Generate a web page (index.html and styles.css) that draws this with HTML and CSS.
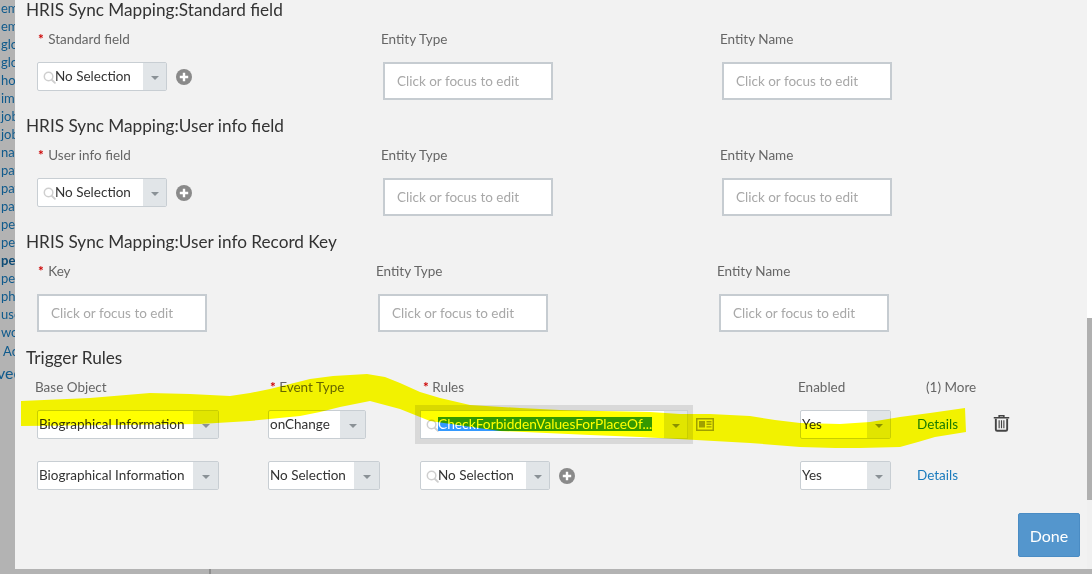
FILE: index.html
```html
<!DOCTYPE html>
<html lang="en">
<head>
<meta charset="utf-8">
<title>HRIS Sync Mapping</title>
<link rel="stylesheet" href="styles.css">
</head>
<body>
<svg width="0" height="0" class="defs" aria-hidden="true">
  <symbol id="i-search" viewBox="0 0 14 14"><circle cx="6" cy="6" r="4.6" fill="none" stroke="currentColor" stroke-width="1.6"/><path d="M9.4 9.4l3.4 3.4" stroke="currentColor" stroke-width="2" stroke-linecap="round"/></symbol>
  <symbol id="i-plus" viewBox="0 0 16 16"><circle cx="8" cy="8" r="8" fill="currentColor"/><path d="M8 3.8v8.4M3.8 8h8.4" stroke="#fff" stroke-width="2.4"/></symbol>
</svg>
<div class="stage">
  <div class="top">
    <div class="side">
      <div>em</div><div>em</div><div>glo</div><div>glo</div><div>hor</div><div>iml</div><div>job</div><div>job</div><div>nat</div><div>pay</div><div>pay</div><div>pay</div><div>per</div><div>per</div><div class="side-bold">per</div><div>per</div><div>pho</div><div>use</div><div>wo</div>
      <div class="side-add">Ac</div>
      <div class="side-big">vee</div>
    </div>
    <main class="modal">
      <section class="group">
        <h2 class="title">HRIS Sync Mapping:Standard field</h2>
        <div class="fields cols-a">
          <label class="label"><span class="req">*</span> Standard field</label>
          <label class="label">Entity Type</label>
          <label class="label">Entity Name</label>
          <div class="with-add">
            <div class="select w130 search"><svg class="mag"><use href="#i-search"/></svg><span class="val">No Selection</span><span class="arrow"><i></i></span></div>
            <svg class="add"><use href="#i-plus"/></svg>
          </div>
          <div class="input">Click or focus to edit</div>
          <div class="input">Click or focus to edit</div>
        </div>
      </section>
      <section class="group">
        <h2 class="title">HRIS Sync Mapping:User info field</h2>
        <div class="fields cols-a">
          <label class="label"><span class="req">*</span> User info field</label>
          <label class="label">Entity Type</label>
          <label class="label">Entity Name</label>
          <div class="with-add">
            <div class="select w130 search"><svg class="mag"><use href="#i-search"/></svg><span class="val">No Selection</span><span class="arrow"><i></i></span></div>
            <svg class="add"><use href="#i-plus"/></svg>
          </div>
          <div class="input">Click or focus to edit</div>
          <div class="input">Click or focus to edit</div>
        </div>
      </section>
      <section class="group">
        <h2 class="title">HRIS Sync Mapping:User info Record Key</h2>
        <div class="fields cols-b">
          <label class="label"><span class="req">*</span> Key</label>
          <label class="label">Entity Type</label>
          <label class="label">Entity Name</label>
          <div class="input">Click or focus to edit</div>
          <div class="input">Click or focus to edit</div>
          <div class="input">Click or focus to edit</div>
        </div>
      </section>
      <section class="rules">
        <h2 class="title">Trigger Rules</h2>
        <div class="rule-grid">
          <label class="label lb-base">Base Object</label>
          <label class="label lb-event"><span class="req">*</span> Event Type</label>
          <label class="label lb-rules"><span class="req">*</span> Rules</label>
          <label class="label lb-enabled">Enabled</label>
          <label class="label lb-more">(1) More</label>
          <span></span>

          <div class="select w182"><span class="val">Biographical Information</span><span class="arrow"><i></i></span></div>
          <div class="select w98"><span class="val">onChange</span><span class="arrow"><i></i></span></div>
          <div class="with-card">
            <div class="select w268 search focus"><svg class="mag"><use href="#i-search"/></svg><span class="val"><span class="sel">CheckForbiddenValuesForPlaceOf...</span></span><span class="arrow"><i></i></span></div>
            <svg class="card" viewBox="0 0 18 13"><rect x=".75" y=".75" width="16.5" height="11.5" fill="none" stroke="currentColor" stroke-width="1.5"/><rect x="3" y="3" width="6" height="6.5" fill="currentColor"/><path d="M10.5 3.7h5M10.5 6.3h5M10.5 8.9h5" stroke="currentColor" stroke-width="1.4"/></svg>
          </div>
          <div class="select w91"><span class="val">Yes</span><span class="arrow"><i></i></span></div>
          <a class="link">Details</a>
          <svg class="trash" viewBox="0 0 18 18"><path d="M6.5 2.6V1.2h5v1.4M.8 3.4h16.4" fill="none" stroke="currentColor" stroke-width="1.6"/><path d="M3 4.6v11.2c0 .9.6 1.4 1.4 1.4h9.2c.8 0 1.4-.5 1.4-1.4V4.6" fill="none" stroke="currentColor" stroke-width="2"/><path d="M6.5 6v8.5M9 6v8.5M11.5 6v8.5" stroke="currentColor" stroke-width="1.2"/></svg>

          <div class="select w182"><span class="val">Biographical Information</span><span class="arrow"><i></i></span></div>
          <div class="select w112"><span class="val">No Selection</span><span class="arrow"><i></i></span></div>
          <div class="with-add">
            <div class="select w130 search"><svg class="mag"><use href="#i-search"/></svg><span class="val">No Selection</span><span class="arrow"><i></i></span></div>
            <svg class="add"><use href="#i-plus"/></svg>
          </div>
          <div class="select w91"><span class="val">Yes</span><span class="arrow"><i></i></span></div>
          <a class="link">Details</a>
          <span></span>
        </div>
      </section>
      <footer class="actions"><button class="done" type="button">Done</button></footer>
    </main>
    <div class="track"><div class="thumb"></div></div>
  </div>
  <div class="under"><div class="under-line"></div></div>
  <svg class="marker" viewBox="0 0 1092 574" aria-hidden="true"><polygon points="21,401 90,398 150,393 190,394 230,396 250,393 270,389 290,384 310,379 333,376 367,374 385,377 400,383 420,392 440,398 470,405 520,408 560,410 600,411 650,412 680,414 710,414 750,416 775,420 800,423 840,424 870,422 900,417 930,413 965,408 966,432 935,437 918,442 900,447 860,448 835,448 800,447 750,443 696,440 640,437 590,435 500,431 465,426 430,421 400,409 370,401 340,407 320,412 300,416 250,421 200,424 120,425 21,426"/></svg>
</div>
</body>
</html>
```

FILE: styles.css
```css
* { box-sizing: border-box; }
html, body { margin: 0; padding: 0; }
body { font-family: Lato, "Open Sans", sans-serif; overflow: hidden; }
.defs { display: block; height: 0; }
.stage { position: relative; width: 1092px; height: 574px; background: #b3b3b3; overflow: hidden; display: flex; flex-direction: column; }
.top { display: flex; height: 569px; }
.under { height: 5px; padding-left: 209px; }
.under-line { width: 2px; height: 5px; background: #8f8f8f; }

.side { width: 15px; flex: none; overflow: hidden; color: #0f5a8c; font-size: 13px; line-height: 18px; white-space: nowrap; }
.side div { padding-left: 1px; }
.side div:first-child { margin-top: -1px; }
.side .side-bold { font-weight: 700; color: #0b4a75; }
.side .side-add { padding-left: 3px; margin-top: 1px; }
.side .side-big { padding-left: 0; margin-left: -3px; font-size: 16px; line-height: 20px; margin-top: 3px; }

.modal { width: 1072px; flex: none; background: #f2f2f2; padding-left: 11px; display: flex; flex-direction: column; }
.track { width: 5px; flex: none; background: linear-gradient(#fff 0 318px, #f0f0f0 318px); padding-top: 318px; }
.thumb { height: 182px; background: #b0b0b0; }

.title { margin: 0; font-size: 17.2px; line-height: 20px; font-weight: 400; color: #333; }
.group { height: 116px; }
.group .req { margin-right: 1px; }
.fields { display: grid; row-gap: 15px; margin-top: 11px; padding-left: 11px; }
.cols-a { grid-template-columns: 344px 339px 1fr; }
.cols-a .input { margin-left: 2px; }
.cols-b { grid-template-columns: 341px 341px 1fr; }
.cols-b .label:nth-child(2), .cols-b .label:nth-child(3) { margin-left: -2px; }

.label { font-size: 13.5px; line-height: 16px; color: #666; white-space: nowrap; }
.req { color: #c00; font-weight: 700; margin-left: 1px; }

.input { width: 170px; height: 38px; background: #fff; border: 2px solid #c6ccd1; padding-left: 12px; font-size: 13.5px; line-height: 34px; color: #a8a8a8; white-space: nowrap; }

.with-add, .with-card { display: flex; align-items: center; height: 29px; }
.add { width: 16px; height: 16px; color: #8a8a8a; margin-left: 9px; }
.card { width: 18px; height: 13px; color: #a0a0a0; margin-left: 8px; }

.select { display: flex; height: 29px; background: #fff; border: 1px solid #c8ced3; border-radius: 2px; font-size: 13.5px; line-height: 27px; color: #333; flex: none; }
.select .val { flex: 1; padding-left: 1px; white-space: nowrap; overflow: hidden; }
.arrow { flex: none; width: 23px; background: #e1e5e8; display: flex; align-items: center; justify-content: center; padding-top: 3px; }
.arrow i { display: block; width: 0; height: 0; border-left: 4px solid transparent; border-right: 4px solid transparent; border-top: 4px solid #8a9196; }
.search .val { padding-left: 0; }
.mag { width: 13px; height: 13px; margin: 8px -1px 0 5px; color: #cfcfcf; flex: none; }
.w130 { width: 130px; }
.w182 { width: 182px; }
.w182 .arrow { width: 25px; }
.w98 { width: 98px; }
.w98 .arrow { width: 25px; }
.w112 { width: 112px; }
.w112 .arrow { width: 25px; }
.w268 { width: 268px; }
.w91 { width: 91px; }
.focus { box-shadow: 0 0 0 5px #d9d9d9; border-radius: 0; }
.sel { background: #3399ff; color: #fff; display: inline-block; line-height: 14px; font-size: 13.75px; }

.rules { height: 165px; }
.rule-grid { display: grid; grid-template-columns: 231px 152px 380px 117px 76px 1fr; grid-template-rows: 16px 29px 29px; row-gap: 15px; margin-top: 11px; padding-left: 11px; align-items: start; }
.rule-grid > :nth-child(n+13) { margin-top: 7px; }
.lb-base, .lb-enabled { margin-left: -2px; }
.lb-event { margin-left: 1px; }
.lb-rules { margin-left: 2px; }
.lb-more { margin-left: 9px; }
.link { font-size: 13.5px; line-height: 29px; color: #1a7bbd; }
.trash { width: 17px; height: 18px; color: #444; margin-top: 4px; }

.actions { display: flex; justify-content: flex-end; padding-right: 7px; }
.done { width: 62px; height: 44px; background: #5496cd; border: 1px solid #4a8cc4; border-radius: 2px; color: #fff; font: 400 16px Lato, sans-serif; padding: 0; }

.marker { position: absolute; left: 0; top: 0; width: 1092px; height: 574px; mix-blend-mode: multiply; pointer-events: none; }
.marker polygon { fill: #ffff00; }
```
